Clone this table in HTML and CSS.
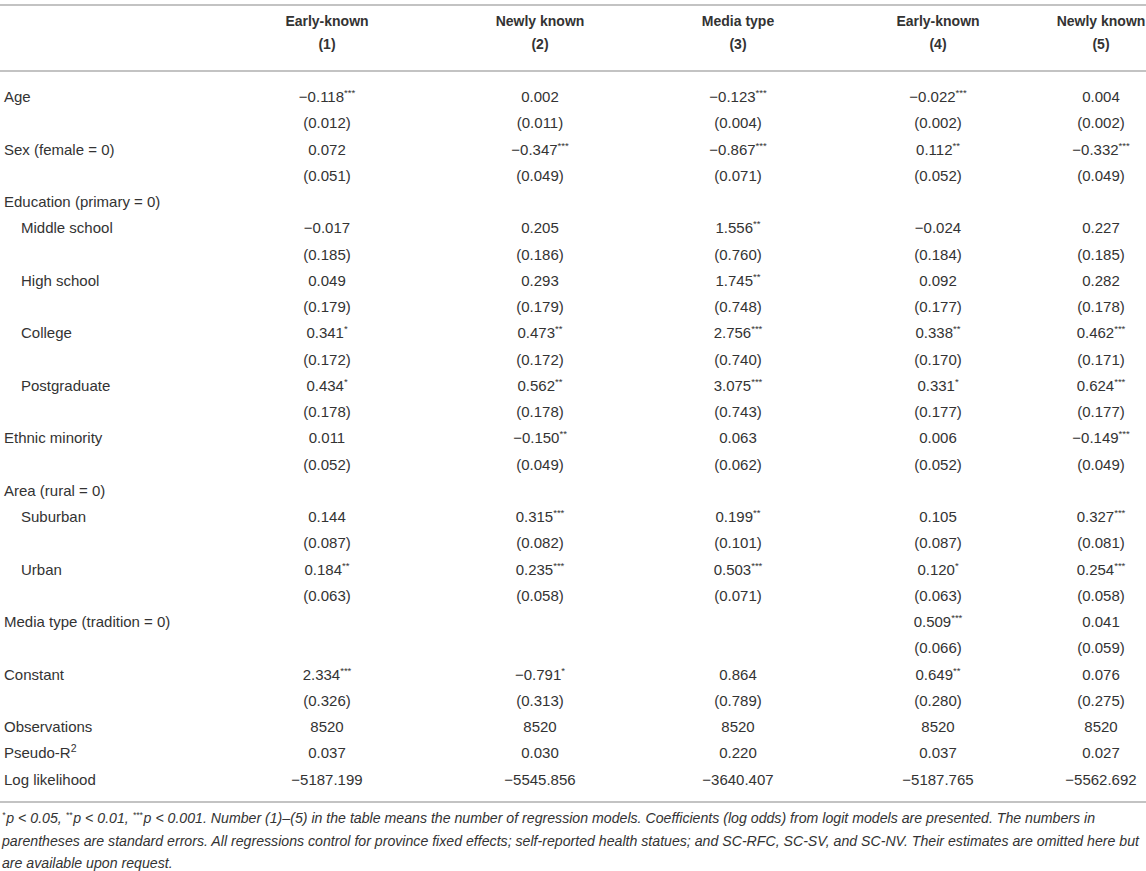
FILE: index.html
```html
<!DOCTYPE html>
<html lang="en">
<head>
<meta charset="utf-8">
<title>Regression table</title>
<link rel="stylesheet" href="styles.css">
</head>
<body>
<div class="tbl">
  <div class="head">
    <div class="row hrow">
      <div class="c lbl"></div>
      <div class="c">Early-known<br>(1)</div>
      <div class="c">Newly known<br>(2)</div>
      <div class="c">Media type<br>(3)</div>
      <div class="c">Early-known<br>(4)</div>
      <div class="c">Newly known<br>(5)</div>
    </div>
  </div>
  <div class="body">
    <div class="row"><div class="c lbl">Age</div><div class="c">−0.118<sup>***</sup></div><div class="c">0.002</div><div class="c">−0.123<sup>***</sup></div><div class="c">−0.022<sup>***</sup></div><div class="c">0.004</div></div>
    <div class="row"><div class="c lbl"></div><div class="c">(0.012)</div><div class="c">(0.011)</div><div class="c">(0.004)</div><div class="c">(0.002)</div><div class="c">(0.002)</div></div>
    <div class="row"><div class="c lbl">Sex (female = 0)</div><div class="c">0.072</div><div class="c">−0.347<sup>***</sup></div><div class="c">−0.867<sup>***</sup></div><div class="c">0.112<sup>**</sup></div><div class="c">−0.332<sup>***</sup></div></div>
    <div class="row"><div class="c lbl"></div><div class="c">(0.051)</div><div class="c">(0.049)</div><div class="c">(0.071)</div><div class="c">(0.052)</div><div class="c">(0.049)</div></div>
    <div class="row"><div class="c lbl">Education (primary = 0)</div><div class="c"></div><div class="c"></div><div class="c"></div><div class="c"></div><div class="c"></div></div>
    <div class="row"><div class="c lbl sub">Middle school</div><div class="c">−0.017</div><div class="c">0.205</div><div class="c">1.556<sup>**</sup></div><div class="c">−0.024</div><div class="c">0.227</div></div>
    <div class="row"><div class="c lbl"></div><div class="c">(0.185)</div><div class="c">(0.186)</div><div class="c">(0.760)</div><div class="c">(0.184)</div><div class="c">(0.185)</div></div>
    <div class="row"><div class="c lbl sub">High school</div><div class="c">0.049</div><div class="c">0.293</div><div class="c">1.745<sup>**</sup></div><div class="c">0.092</div><div class="c">0.282</div></div>
    <div class="row"><div class="c lbl"></div><div class="c">(0.179)</div><div class="c">(0.179)</div><div class="c">(0.748)</div><div class="c">(0.177)</div><div class="c">(0.178)</div></div>
    <div class="row"><div class="c lbl sub">College</div><div class="c">0.341<sup>*</sup></div><div class="c">0.473<sup>**</sup></div><div class="c">2.756<sup>***</sup></div><div class="c">0.338<sup>**</sup></div><div class="c">0.462<sup>***</sup></div></div>
    <div class="row"><div class="c lbl"></div><div class="c">(0.172)</div><div class="c">(0.172)</div><div class="c">(0.740)</div><div class="c">(0.170)</div><div class="c">(0.171)</div></div>
    <div class="row"><div class="c lbl sub">Postgraduate</div><div class="c">0.434<sup>*</sup></div><div class="c">0.562<sup>**</sup></div><div class="c">3.075<sup>***</sup></div><div class="c">0.331<sup>*</sup></div><div class="c">0.624<sup>***</sup></div></div>
    <div class="row"><div class="c lbl"></div><div class="c">(0.178)</div><div class="c">(0.178)</div><div class="c">(0.743)</div><div class="c">(0.177)</div><div class="c">(0.177)</div></div>
    <div class="row"><div class="c lbl">Ethnic minority</div><div class="c">0.011</div><div class="c">−0.150<sup>**</sup></div><div class="c">0.063</div><div class="c">0.006</div><div class="c">−0.149<sup>***</sup></div></div>
    <div class="row"><div class="c lbl"></div><div class="c">(0.052)</div><div class="c">(0.049)</div><div class="c">(0.062)</div><div class="c">(0.052)</div><div class="c">(0.049)</div></div>
    <div class="row"><div class="c lbl">Area (rural = 0)</div><div class="c"></div><div class="c"></div><div class="c"></div><div class="c"></div><div class="c"></div></div>
    <div class="row"><div class="c lbl sub">Suburban</div><div class="c">0.144</div><div class="c">0.315<sup>***</sup></div><div class="c">0.199<sup>**</sup></div><div class="c">0.105</div><div class="c">0.327<sup>***</sup></div></div>
    <div class="row"><div class="c lbl"></div><div class="c">(0.087)</div><div class="c">(0.082)</div><div class="c">(0.101)</div><div class="c">(0.087)</div><div class="c">(0.081)</div></div>
    <div class="row"><div class="c lbl sub">Urban</div><div class="c">0.184<sup>**</sup></div><div class="c">0.235<sup>***</sup></div><div class="c">0.503<sup>***</sup></div><div class="c">0.120<sup>*</sup></div><div class="c">0.254<sup>***</sup></div></div>
    <div class="row"><div class="c lbl"></div><div class="c">(0.063)</div><div class="c">(0.058)</div><div class="c">(0.071)</div><div class="c">(0.063)</div><div class="c">(0.058)</div></div>
    <div class="row"><div class="c lbl">Media type (tradition = 0)</div><div class="c"></div><div class="c"></div><div class="c"></div><div class="c">0.509<sup>***</sup></div><div class="c">0.041</div></div>
    <div class="row"><div class="c lbl"></div><div class="c"></div><div class="c"></div><div class="c"></div><div class="c">(0.066)</div><div class="c">(0.059)</div></div>
    <div class="row"><div class="c lbl">Constant</div><div class="c">2.334<sup>***</sup></div><div class="c">−0.791<sup>*</sup></div><div class="c">0.864</div><div class="c">0.649<sup>**</sup></div><div class="c">0.076</div></div>
    <div class="row"><div class="c lbl"></div><div class="c">(0.326)</div><div class="c">(0.313)</div><div class="c">(0.789)</div><div class="c">(0.280)</div><div class="c">(0.275)</div></div>
    <div class="row"><div class="c lbl">Observations</div><div class="c">8520</div><div class="c">8520</div><div class="c">8520</div><div class="c">8520</div><div class="c">8520</div></div>
    <div class="row"><div class="c lbl">Pseudo-R<sup class="exp">2</sup></div><div class="c">0.037</div><div class="c">0.030</div><div class="c">0.220</div><div class="c">0.037</div><div class="c">0.027</div></div>
    <div class="row"><div class="c lbl">Log likelihood</div><div class="c">−5187.199</div><div class="c">−5545.856</div><div class="c">−3640.407</div><div class="c">−5187.765</div><div class="c">−5562.692</div></div>
  </div>
  <p class="note"><sup>*</sup>p &lt; 0.05, <sup>**</sup>p &lt; 0.01, <sup>***</sup>p &lt; 0.001. Number (1)–(5) in the table means the number of regression models. Coefficients (log odds) from logit models are presented. The numbers in parentheses are standard errors. All regressions control for province fixed effects; self-reported health statues; and SC-RFC, SC-SV, and SC-NV. Their estimates are omitted here but are available upon request.</p>
</div>
</body>
</html>
```

FILE: styles.css
```css
html, body {
  margin: 0;
  padding: 0;
  background: #ffffff;
}

body {
  font-family: "Liberation Sans", Arial, Helvetica, sans-serif;
  color: #333333;
  font-size: 15px;
  overflow: hidden;
}

.tbl {
  width: 1146px;
  padding-top: 4px;
}

.head {
  border-top: 2px solid #c3c3c3;
  border-bottom: 2px solid #c3c3c3;
  padding: 4px 0 14px;
  font-weight: bold;
  font-size: 14px;
}

.body {
  padding: 12px 0 8px;
  border-bottom: 2px solid #c3c3c3;
}

.row {
  display: grid;
  grid-template-columns: 230px 194px 232px 164px 236px 90px;
  height: 26.25px;
  align-items: center;
}

.head .row {
  height: auto;
}

.c {
  text-align: center;
  white-space: nowrap;
  line-height: 18px;
}

.hrow .c {
  line-height: 23px;
}

.c.lbl {
  text-align: left;
  padding-left: 4px;
}

.c.lbl.sub {
  padding-left: 21px;
}

sup {
  font-size: 9.5px;
  line-height: 0;
  vertical-align: 6px;
}

sup.exp {
  font-size: 10.5px;
  vertical-align: 6px;
}

.note {
  margin: 0;
  padding: 4px 0 0 2px;
  font-style: italic;
  font-size: 14.15px;
  line-height: 22.8px;
}

.note sup {
  font-size: 8.5px;
  vertical-align: 5px;
  margin-right: 1px;
}
```
